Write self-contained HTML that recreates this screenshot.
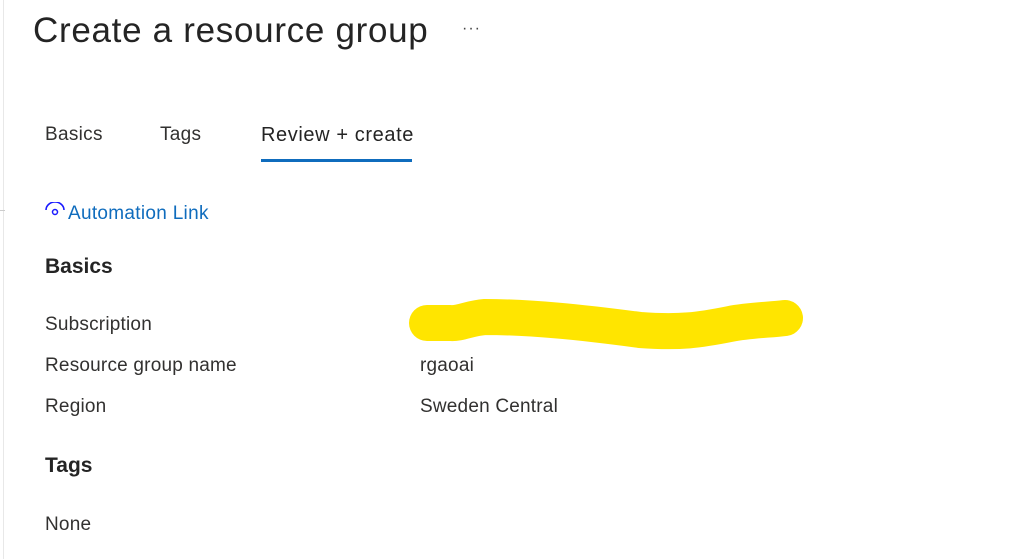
<!DOCTYPE html>
<html><head><style>
body{margin:0;width:1009px;height:559px;background:#fff;font-family:"Liberation Sans",sans-serif;color:#323130;position:relative;overflow:hidden}
.a{position:absolute;white-space:nowrap}
</style></head><body>
<div class="a" style="left:3px;top:0;width:1px;height:559px;background:#e8e8e8"></div>
<div class="a" style="left:0;top:210px;width:5px;height:1px;background:#ccc"></div>
<div class="a" style="left:33px;top:11px;font-size:35px;color:#242424;letter-spacing:0.7px">Create a resource group</div>
<div class="a" style="left:462px;top:20px;font-size:16px;color:#444;letter-spacing:1px">···</div>
<div class="a" style="left:45px;top:124px;font-size:19px;letter-spacing:0.3px">Basics</div>
<div class="a" style="left:160px;top:124px;font-size:19px;letter-spacing:0.3px">Tags</div>
<div class="a" style="left:261px;top:124px;font-size:20px;color:#242424;letter-spacing:0.6px">Review + create</div>
<div class="a" style="left:261px;top:159px;width:151px;height:3px;background:#0f6cbd"></div>
<svg class="a" style="left:44px;top:202px" width="24" height="16" viewBox="0 0 24 16"><path d="M2 8 A9 8 0 0 1 20 8" fill="none" stroke="#1a1aff" stroke-width="1.6"/><circle cx="11" cy="10" r="2.5" fill="none" stroke="#1a1aff" stroke-width="1.5"/></svg>
<div class="a" style="left:68px;top:203px;font-size:19px;color:#0f6cbd;letter-spacing:0.3px">Automation Link</div>
<div class="a" style="left:45px;top:255px;font-size:21px;font-weight:bold;color:#242424">Basics</div>
<div class="a" style="left:45px;top:314px;font-size:19px;letter-spacing:0.2px">Subscription</div>
<div class="a" style="left:45px;top:355px;font-size:19px;letter-spacing:0.2px">Resource group name</div>
<div class="a" style="left:45px;top:396px;font-size:19px;letter-spacing:0.2px">Region</div>
<div class="a" style="left:420px;top:355px;font-size:19px;letter-spacing:0.2px">rgaoai</div>
<div class="a" style="left:420px;top:396px;font-size:19px;letter-spacing:0.2px">Sweden Central</div>
<div class="a" style="left:45px;top:454px;font-size:21px;font-weight:bold;color:#242424">Tags</div>
<div class="a" style="left:45px;top:514px;font-size:19px;letter-spacing:0.2px">None</div>
<svg class="a" style="left:0;top:0" width="1009" height="559"><path d="M427 323 L450 323 C460 324 470 318 485 317 C530 317 580 322 640 330 C680 333 700 330 730 324 C750 320 770 320 785 318" fill="none" stroke="#ffe500" stroke-width="36" stroke-linecap="round" stroke-linejoin="round"/></svg>
</body></html>
